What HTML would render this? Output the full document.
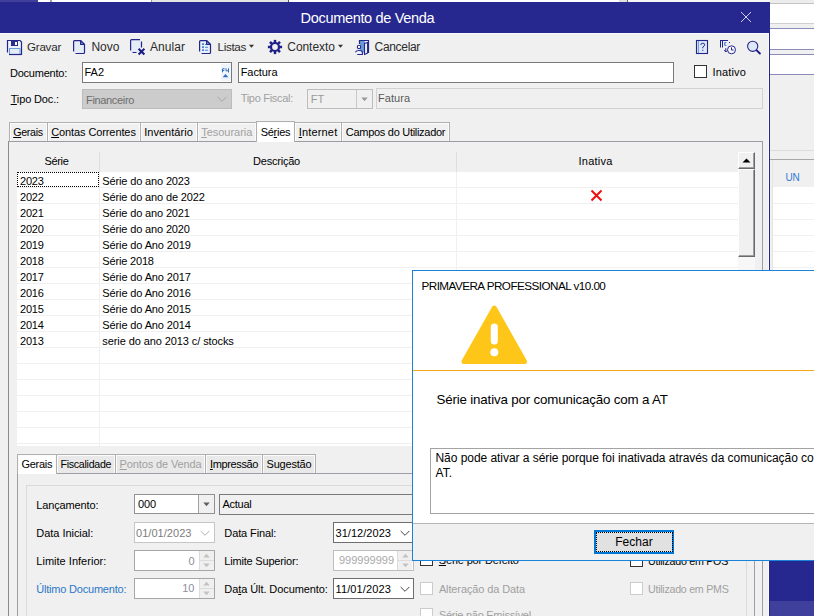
<!DOCTYPE html>
<html lang="pt"><head><meta charset="utf-8"><title>Documento de Venda</title>
<style>
html,body{margin:0;padding:0}
body{width:814px;height:616px;overflow:hidden;position:relative;background:#f0f0f0;font-family:"Liberation Sans",sans-serif;font-size:11px;color:#000}
div,span,svg{position:absolute;box-sizing:border-box}
.t{height:16px;line-height:16px;white-space:nowrap}
u{text-decoration:underline;text-underline-offset:1px}
#win{left:0;top:0;width:771px;height:616px;background:#f0f0f0;overflow:hidden}
#dlg{left:412px;top:270px;width:420px;height:291px;background:#fff;border:1px solid #1a82d9;overflow:hidden}
.fld{background:#fff;border:1px solid #7a7a7a}
.dis{background:#f0f0f0;border:1px solid #cfcfcf}
.tab{background:#f0f0f0;border:1px solid #b0b0b0;border-bottom:none;box-shadow:inset 1px 1px 0 #fbfbfb,inset -1px 0 0 #fbfbfb}
.cb{width:13px;height:13px;background:#fff;border:1px solid #333}
.cbd{width:13px;height:13px;background:#fff;border:1px solid #cccccc}
.hl{height:1px;background:#f0f0f0}

</style></head>
<body>
<!-- ================= background (other windows behind) ================= -->
<div id="bg" style="left:0;top:0;width:814px;height:616px;background:#f0f0f0">
  <!-- top strip -->
  <div style="left:0;top:0;width:38px;height:2px;background:#41419d"></div>
  <div style="left:38px;top:0;width:12px;height:2px;background:#fff"></div>
  <div style="left:50px;top:0;width:2px;height:2px;background:#a0a0a0"></div>
  <div style="left:52px;top:0;width:99px;height:2px;background:#fff"></div>
  <div style="left:151px;top:0;width:1px;height:2px;background:#999"></div>
  <div style="left:152px;top:0;width:136px;height:2px;background:#e4e4e4"></div>
  <div style="left:288px;top:0;width:1px;height:2px;background:#555"></div>
  <div style="left:289px;top:0;width:330px;height:2px;background:#fff"></div>
  <div style="left:619px;top:0;width:8px;height:2px;background:#e0e0e0"></div>
  <div style="left:627px;top:0;width:1px;height:2px;background:#666"></div>
  <div style="left:628px;top:0;width:142px;height:2px;background:#f6f6f6"></div>
  <!-- right side fields -->
  <div style="left:770px;top:0;width:44px;height:3px;background:#ececec"></div>
  <div style="left:770px;top:3px;width:44px;height:1px;background:#c4c4c4"></div>
  <div style="left:770px;top:4px;width:44px;height:20px;background:#fff"></div>
  <div style="left:770px;top:23px;width:44px;height:1px;background:#cfcfcf"></div>
  <div style="left:770px;top:28px;width:44px;height:22px;background:#fff;border-top:1px solid #8c8cb8;border-bottom:1px solid #8c8cb8"></div>
  <div style="left:770px;top:54px;width:44px;height:21px;background:#fff;border-top:1px solid #8c8cb8;border-bottom:1px solid #8c8cb8"></div>
  <div style="left:770px;top:150px;width:44px;height:1px;background:#dcdcdc"></div>
  <div style="left:770px;top:159px;width:44px;height:1px;background:#a8a8a8"></div>
  <div style="left:773px;top:187px;width:41px;height:90px;background:#fff"></div>
  <div class="hl" style="left:773px;top:203px;width:41px"></div>
  <div class="hl" style="left:773px;top:219px;width:41px"></div>
  <div class="hl" style="left:773px;top:235px;width:41px"></div>
  <div class="hl" style="left:773px;top:251px;width:41px"></div>
  <div class="hl" style="left:773px;top:267px;width:41px"></div>
  <div style="left:772px;top:160px;width:1px;height:120px;background:#e4e4e4"></div>
  <!-- bottom right blue -->
  <div style="left:769px;top:560px;width:45px;height:41px;background:#26288f"></div>
  <div style="left:770px;top:601px;width:44px;height:15px;background:#3f3f9c"></div>
<span class="t" id="t73" style="left:785.5px;top:169.7px;font-size:10.04px;color:#2f7bd0;letter-spacing:-0.250px;">UN</span>
</div>

<!-- ================= main window ================= -->
<div id="win" style="top:2px;height:614px;width:770px;background:#f0f0f0;border-right:1px solid #26288f">
<div id="wi" style="left:0;top:-2px;width:770px;height:616px">
  <div style="left:0;top:2px;width:770px;height:31px;background:#26288f"></div>
  <div style="left:0;top:33px;width:769px;height:1px;background:#fafafa"></div>
  <div style="left:768px;top:33px;width:1px;height:583px;background:#fafafa"></div>
  <!-- close X -->
  <svg style="left:739px;top:10px" width="14" height="14" viewBox="0 0 14 14"><path d="M2 2 L12 12 M12 2 L2 12" stroke="#e4e4f0" stroke-width="0.9" fill="none"/></svg>

  <!-- toolbar icons -->
  <!-- save -->
  <svg style="left:6px;top:39px" width="18" height="18" viewBox="0 0 18 18">
    <path d="M1.5 13.5 V1.5 H14 L15.5 3 V15.5 H3.5" fill="#eef2fa" stroke="#23268a" stroke-width="1.2"/>
    <rect x="3.5" y="9.5" width="10.5" height="6" fill="#e4ecf7" stroke="#6b9cd9" stroke-width="1"/>
    <path d="M3 15.5 H15.5" stroke="#23268a" stroke-width="1.2"/>
    <rect x="5" y="2" width="7" height="5" fill="#2a2f8c"/><rect x="9" y="3" width="2" height="3" fill="#fff"/>
  </svg>
  <!-- new -->
  <svg style="left:72px;top:39px" width="15" height="17" viewBox="0 0 15 17">
    <path d="M1.6 12.5 V2.6 Q1.6 1.6 2.6 1.6 H8.6 L12.5 5.5 V13.5 Q12.5 14.5 11.5 14.5 H3.5" fill="#e4ecf7" stroke="#23268a" stroke-width="1.2"/>
    <path d="M8.6 1.6 V5.5 H12.5 Z" fill="#6b9cd9" stroke="#23268a" stroke-width="1.1" stroke-linejoin="round"/>
  </svg>
  <!-- anular -->
  <svg style="left:129px;top:38px" width="18" height="19" viewBox="0 0 18 19">
    <rect x="2" y="2" width="10" height="12" fill="#e4ecf7"/>
    <path d="M1.6 12.6 V2.6 Q1.6 1.6 2.6 1.6 H11 M12.5 3.5 V9.5 M3.5 14.5 H7.5" fill="none" stroke="#23268a" stroke-width="1.2"/>
    <path d="M9.6 10.7 L15.4 16.5 M15.4 10.7 L9.6 16.5" stroke="#1c1c84" stroke-width="2" fill="none"/>
  </svg>
  <!-- listas -->
  <svg style="left:198px;top:39px" width="15" height="17" viewBox="0 0 15 17">
    <path d="M1.6 12.5 V2.6 Q1.6 1.6 2.6 1.6 H8.6 L12.5 5.5 V13.5 Q12.5 14.5 11.5 14.5 H3.5" fill="#eaf0fa" stroke="#23268a" stroke-width="1.2"/>
    <path d="M8.6 1.6 V5.5 H12.5 Z" fill="#6b9cd9" stroke="#23268a" stroke-width="1.1" stroke-linejoin="round"/>
    <path d="M4 4.2h2v1.9h-2z M4 7.2h2v1.9h-2z M4 10.2h2v1.9h-2z M7 7.7h3v1h-3z M7 10.7h3v1h-3z M7 5h1.2v.9h-1.2z" fill="#4a86d8"/>
  </svg>
  <!-- dropdown arrows -->
  <svg style="left:248px;top:44px" width="7" height="5" viewBox="0 0 7 5"><path d="M0.9 0.8 H6.1 L3.5 3.7 Z" fill="#333"/></svg>
  <svg style="left:337px;top:44px" width="7" height="5" viewBox="0 0 7 5"><path d="M0.9 0.8 H6.1 L3.5 3.7 Z" fill="#333"/></svg>
  <!-- gear -->
  <svg style="left:267px;top:39px" width="16" height="16" viewBox="-8 -8 16 16">
    <g fill="#1f2088"><rect x="-1.25" y="-7.1" width="2.5" height="14.2"/><rect x="-1.25" y="-7.1" width="2.5" height="14.2" transform="rotate(45)"/><rect x="-1.25" y="-7.1" width="2.5" height="14.2" transform="rotate(90)"/><rect x="-1.25" y="-7.1" width="2.5" height="14.2" transform="rotate(135)"/><circle r="5.1"/></g>
    <circle r="2.9" fill="#f0f0f0"/>
  </svg>
  <!-- cancelar (door) -->
  <svg style="left:354px;top:39px" width="17" height="17" viewBox="0 0 17 17">
    <rect x="6" y="2" width="5" height="11.5" fill="#6c9ad8"/>
    <path d="M5.5 5 V1.5 H14.5 V13.5 H13" fill="none" stroke="#23268a" stroke-width="1.2"/>
    <path d="M10.5 4.6 L13.6 3.4 V14 L10.5 15.6 Z" fill="#eef2fa" stroke="#23268a" stroke-width="1.1" stroke-linejoin="round"/>
    <circle cx="5" cy="8" r="1.7" fill="#fff" stroke="#23268a" stroke-width="1.1"/>
    <path d="M1.4 13.2 Q2.2 11.5 5 11.5 Q8 11.5 8.4 13.2 V15.5 H3.2" fill="#eef2fa" stroke="#23268a" stroke-width="1.1"/>
  </svg>
  <!-- help -->
  <svg style="left:695px;top:39px" width="14" height="16" viewBox="0 0 14 16">
    <rect x="1.5" y="1.5" width="11" height="13" fill="#dfe8f8" stroke="#23268a" stroke-width="1.1"/><path d="M3.4 2V14" stroke="#6b9cd9" stroke-width="1"/>
    <path d="M5.8 6 Q5.8 4.2 7.8 4.2 Q9.7 4.2 9.7 5.8 Q9.7 6.9 7.8 8 V9.3 M7.8 10.8V12" stroke="#23268a" stroke-width="0.95" fill="none"/>
  </svg>
  <!-- history -->
  <svg style="left:719px;top:39px" width="18" height="17" viewBox="0 0 18 17">
    <path d="M1 1.5h8 M1.5 1.5v7 M3.5 1.5v7" stroke="#23268a" stroke-width="1" fill="none"/>
    <path d="M5.5 3.5h2 M5.5 5h1.5 M5.5 6.5h2 M5.5 3.5v3" stroke="#5a90dc" stroke-width="1" fill="none"/>
    <path d="M10 3.5h1" stroke="#23268a" stroke-width="1"/>
    <circle cx="12.5" cy="10.8" r="4" fill="#f6f8fd" stroke="#23268a" stroke-width="1"/><path d="M12.5 8.4V11H14.6" stroke="#23268a" stroke-width="1" fill="none"/>
    <path d="M6.8 9.2 V12.8 M5.3 11.2 L6.8 13 L8.2 11.6" stroke="#23268a" stroke-width="1" fill="none"/>
  </svg>
  <!-- search -->
  <svg style="left:746px;top:40px" width="16" height="16" viewBox="0 0 16 16">
    <circle cx="6.7" cy="6.3" r="5.1" fill="#dfe8f8" stroke="#23268a" stroke-width="1.1"/><path d="M10.7 10.3 L13.9 13.5" stroke="#1c1c84" stroke-width="1.9" stroke-linecap="round"/>
  </svg>

  <!-- row 1 -->
  <div class="fld" style="left:82px;top:62px;width:150px;height:21px"></div>
  <div style="left:221px;top:64px;width:10px;height:17px;background:#f1f5fb"></div>
  <svg style="left:221px;top:67px" width="10" height="12" viewBox="0 0 10 12"><path d="M1.5 5.3V1.8H3.6M1.5 3.5H3.2 M5 1.3v2.5H7.5 M7.5 1.3V5.5" stroke="#2f6fc0" stroke-width="1" fill="none"/><path d="M1.6 10.3 L4.5 7 L7.4 10.3 Z" fill="#2f6fc0"/></svg>
  <div class="fld" style="left:238px;top:62px;width:436px;height:21px"></div>
  <div class="cb" style="left:694px;top:65px"></div>
  <!-- row 2 -->
  <div style="left:82px;top:89px;width:150px;height:20px;background:#cccccc;border:1px solid #bcbcbc"></div>
  <svg style="left:217px;top:96px" width="10" height="7" viewBox="0 0 10 7"><path d="M0.7 1 L5 5.3 L9.3 1" stroke="#a6a6a6" stroke-width="1" fill="none"/></svg>
  <div style="left:307px;top:89px;width:66px;height:20px;background:#f0f0f0;border:1px solid #bdbdbd"></div>
  <div style="left:356px;top:90px;width:1px;height:18px;background:#c8c8c8"></div>
  <svg style="left:361px;top:97px" width="7" height="5" viewBox="0 0 7 5"><path d="M0.3 0.5 H6.7 L3.5 4.2 Z" fill="#9a9a9a"/></svg>
  <div style="left:376px;top:88px;width:387px;height:21px;background:#f0f0f0;border:1px solid #d2d2d2"></div>

  <!-- outer tab control -->
  <div style="left:8px;top:141px;width:755px;height:480px;border:1px solid #9c9ca6;border-left:1.5px solid #8a8a92;background:#f0f0f0"></div>
  <div class="tab" style="left:9px;top:122px;width:39px;height:19px"></div>
  <div class="tab" style="left:47px;top:122px;width:94px;height:19px"></div>
  <div class="tab" style="left:140px;top:122px;width:58px;height:19px"></div>
  <div class="tab" style="left:197px;top:122px;width:60px;height:19px"></div>
  <div class="tab" style="left:294px;top:122px;width:48px;height:19px"></div>
  <div class="tab" style="left:341px;top:122px;width:109px;height:19px"></div>
  <div class="tab" style="left:256px;top:121px;width:39px;height:21px;background:#fff"></div>

  <!-- grid -->
  <div style="left:17px;top:172px;width:721px;height:274px;background:#fff"></div>
  <div id="gl"></div>
  <div style="left:99px;top:152px;width:1px;height:20px;background:#dedede"></div>
  <div style="left:456px;top:152px;width:1px;height:20px;background:#dedede"></div>
  <div style="left:99px;top:172px;width:1px;height:274px;background:#f0f0f0"></div>
  <div style="left:456px;top:172px;width:1px;height:274px;background:#f0f0f0"></div>
  <div class="hl" style="left:17px;top:187px;width:721px"></div><div class="hl" style="left:17px;top:203px;width:721px"></div><div class="hl" style="left:17px;top:219px;width:721px"></div><div class="hl" style="left:17px;top:235px;width:721px"></div><div class="hl" style="left:17px;top:251px;width:721px"></div><div class="hl" style="left:17px;top:267px;width:721px"></div><div class="hl" style="left:17px;top:283px;width:721px"></div><div class="hl" style="left:17px;top:299px;width:721px"></div><div class="hl" style="left:17px;top:315px;width:721px"></div><div class="hl" style="left:17px;top:331px;width:721px"></div><div class="hl" style="left:17px;top:347px;width:721px"></div><div class="hl" style="left:17px;top:363px;width:721px"></div><div class="hl" style="left:17px;top:379px;width:721px"></div><div class="hl" style="left:17px;top:395px;width:721px"></div><div class="hl" style="left:17px;top:411px;width:721px"></div><div class="hl" style="left:17px;top:427px;width:721px"></div><div class="hl" style="left:17px;top:443px;width:721px"></div>
  <div style="left:17px;top:172px;width:82px;height:15px;border:1px dotted #000"></div>
  <svg style="left:590px;top:189px" width="13" height="13" viewBox="0 0 13 13"><path d="M1.5 1.5 L11.5 11.5 M11.5 1.5 L1.5 11.5" stroke="#f20d0d" stroke-width="2" fill="none"/></svg>
  <!-- scrollbar -->
  <div style="left:738px;top:169px;width:17px;height:277px;background:#f7f7f7"></div>
  <div style="left:738px;top:152px;width:17px;height:17px;background:#f0f0f0;border:1px solid;border-color:#fff #696969 #696969 #fff;box-shadow:inset -1px -1px 0 #a0a0a0"></div>
  <svg style="left:742px;top:158px" width="9" height="5" viewBox="0 0 9 5"><path d="M0.5 4.5 H8.5 L4.5 0.5 Z" fill="#000"/></svg>
  <div style="left:738px;top:169px;width:17px;height:88px;background:#f0f0f0;border:1px solid;border-color:#fff #696969 #696969 #fff;box-shadow:inset -1px -1px 0 #a0a0a0"></div>

  <!-- inner tab control -->
  <div style="left:17px;top:473px;width:738px;height:160px;border:1px solid #9e9ea8;background:#f0f0f0"></div>
  <div class="tab" style="left:56px;top:454px;width:60px;height:19px;background:#e9e9e9"></div>
  <div class="tab" style="left:115px;top:454px;width:91px;height:19px;background:#e9e9e9"></div>
  <div class="tab" style="left:205px;top:454px;width:58px;height:19px;background:#e9e9e9"></div>
  <div class="tab" style="left:262px;top:454px;width:54px;height:19px;background:#e9e9e9"></div>
  <div class="tab" style="left:17px;top:454px;width:40px;height:20px;background:#fff"></div>
  <!-- inner frame -->
  <div style="left:26px;top:485px;width:721px;height:150px;border:1px solid #dadada"></div>

  <!-- form fields -->
  <div class="fld" style="left:134px;top:494px;width:81px;height:20px;border-color:#919191"></div>
  <div style="left:198px;top:495px;width:1px;height:18px;background:#a0a0a0"></div>
  <div style="left:199px;top:495px;width:15px;height:18px;background:#f0f0f0"></div>
  <svg style="left:203px;top:502px" width="7" height="5" viewBox="0 0 7 5"><path d="M0.3 0.5 H6.7 L3.5 4.2 Z" fill="#606060"/></svg>
  <div style="left:219px;top:494px;width:230px;height:21px;background:#f0f0f0;border:1px solid #7a7a7a"></div>

  <div style="left:134px;top:522px;width:81px;height:21px;background:#fff;border:1px solid #c6c6c6"></div>
  <svg style="left:200px;top:530px" width="10" height="7" viewBox="0 0 10 7"><path d="M0.7 1 L5 5.3 L9.3 1" stroke="#b0b0b0" stroke-width="1" fill="none"/></svg>
  <div class="fld" style="left:333px;top:522px;width:81px;height:21px;border-color:#6e6e6e"></div>
  <svg style="left:400px;top:530px" width="10" height="7" viewBox="0 0 10 7"><path d="M0.7 1 L5 5.3 L9.3 1" stroke="#444" stroke-width="1" fill="none"/></svg>

  <div style="left:134px;top:550px;width:81px;height:21px;background:#fff;border:1px solid #a6a6a6"></div>
  <div style="left:199px;top:551px;width:15px;height:19px;background:#f0f0f0;border-left:1px solid #dcdcdc"></div>
  <div style="left:200px;top:560px;width:14px;height:1px;background:#dcdcdc"></div>
  <svg style="left:203px;top:553px" width="7" height="15" viewBox="0 0 7 15"><path d="M0.3 4.5 H6.7 L3.5 0.8 Z M0.3 10.5 H6.7 L3.5 14.2 Z" fill="#c2c2c2"/></svg>
  <div style="left:333px;top:550px;width:81px;height:21px;background:#fff;border:1px solid #bdbdbd"></div>
  <div style="left:397px;top:551px;width:15px;height:19px;background:#f0f0f0;border-left:1px solid #dcdcdc"></div>
  <div style="left:398px;top:560px;width:14px;height:1px;background:#dcdcdc"></div>
  <svg style="left:402px;top:553px" width="7" height="15" viewBox="0 0 7 15"><path d="M0.3 4.5 H6.7 L3.5 0.8 Z M0.3 10.5 H6.7 L3.5 14.2 Z" fill="#c2c2c2"/></svg>

  <div style="left:134px;top:578px;width:81px;height:21px;background:#fff;border:1px solid #a6a6a6"></div>
  <div style="left:199px;top:579px;width:15px;height:19px;background:#f0f0f0;border-left:1px solid #dcdcdc"></div>
  <div style="left:200px;top:588px;width:14px;height:1px;background:#dcdcdc"></div>
  <svg style="left:203px;top:581px" width="7" height="15" viewBox="0 0 7 15"><path d="M0.3 4.5 H6.7 L3.5 0.8 Z M0.3 10.5 H6.7 L3.5 14.2 Z" fill="#c2c2c2"/></svg>
  <div class="fld" style="left:333px;top:578px;width:81px;height:21px;border-color:#6e6e6e"></div>
  <svg style="left:400px;top:586px" width="10" height="7" viewBox="0 0 10 7"><path d="M0.7 1 L5 5.3 L9.3 1" stroke="#444" stroke-width="1" fill="none"/></svg>

  <!-- checkboxes -->
  <div class="cb" style="left:420px;top:553px"></div>
  <div class="cbd" style="left:420px;top:582px"></div>
  <div class="cbd" style="left:420px;top:608px"></div>
  <div class="cb" style="left:630px;top:554px"></div>
  <div class="cbd" style="left:630px;top:582px"></div>
<span class="t" id="t0" style="left:300.6px;top:9.5px;font-size:14.55px;color:#fff;letter-spacing:-0.351px;">Documento de Venda</span>
<span class="t" id="t1" style="left:27px;top:38.5px;font-size:11.64px;color:#2b2b2b;letter-spacing:-0.255px;">Gravar</span>
<span class="t" id="t2" style="left:91.5px;top:38.5px;font-size:12px;color:#2b2b2b;letter-spacing:-0.054px;">Novo</span>
<span class="t" id="t3" style="left:150px;top:38.5px;font-size:12px;color:#2b2b2b;letter-spacing:0.052px;">Anular</span>
<span class="t" id="t4" style="left:217.5px;top:38.5px;font-size:11.64px;color:#2b2b2b;letter-spacing:-0.312px;">Listas</span>
<span class="t" id="t5" style="left:287.3px;top:38.5px;font-size:12px;color:#2b2b2b;letter-spacing:-0.066px;">Contexto</span>
<span class="t" id="t6" style="left:374.6px;top:38.5px;font-size:12px;color:#2b2b2b;letter-spacing:-0.329px;">Cancelar</span>
<span class="t" id="t7" style="left:10px;top:64.8px;font-size:11px;color:#000;letter-spacing:-0.231px;">Documento:</span>
<span class="t" id="t8" style="left:84.5px;top:64.3px;font-size:11px;color:#000;letter-spacing:-0.026px;">FA2</span>
<span class="t" id="t9" style="left:240.7px;top:63.8px;font-size:11px;color:#000;letter-spacing:-0.071px;">Factura</span>
<span class="t" id="t10" style="left:712.6px;top:64.4px;font-size:11px;color:#000;letter-spacing:0.140px;">Inativo</span>
<span class="t" id="t11" style="left:10.7px;top:91.4px;font-size:11px;color:#000;letter-spacing:-0.143px;"><u>T</u>ipo Doc.:</span>
<span class="t" id="t12" style="left:86px;top:91.8px;font-size:11px;color:#6d6d6d;letter-spacing:-0.336px;">Financeiro</span>
<span class="t" id="t13" style="left:240.7px;top:89.7px;font-size:11px;color:#a0a0a0;letter-spacing:-0.302px;">Tipo Fiscal:</span>
<span class="t" id="t14" style="left:310.7px;top:90.7px;font-size:11px;color:#9a9a9a;letter-spacing:0.023px;">FT</span>
<span class="t" id="t15" style="left:378px;top:89.6px;font-size:11px;color:#5a5a5a;letter-spacing:0.067px;">Fatura</span>
<span class="t" id="t16" style="left:13.2px;top:124px;font-size:10.67px;color:#000;letter-spacing:-0.301px;"><u>G</u>erais</span>
<span class="t" id="t17" style="left:51.2px;top:124px;font-size:11px;color:#000;letter-spacing:-0.101px;"><u>C</u>ontas Correntes</span>
<span class="t" id="t18" style="left:144.2px;top:124px;font-size:11px;color:#000;letter-spacing:0.029px;">Inventário</span>
<span class="t" id="t19" style="left:201.2px;top:124px;font-size:11px;color:#a0a0a0;letter-spacing:-0.026px;"><u>T</u>esouraria</span>
<span class="t" id="t20" style="left:260.7px;top:124px;font-size:11px;color:#000;letter-spacing:-0.267px;">Sé<u>r</u>ies</span>
<span class="t" id="t21" style="left:298.7px;top:124px;font-size:11px;color:#000;letter-spacing:0.173px;"><u>I</u>nternet</span>
<span class="t" id="t22" style="left:345.8px;top:124px;font-size:11px;color:#000;letter-spacing:-0.288px;">Campos do Utilizador</span>
<span class="t" id="t23" style="left:56.5px;transform:translateX(-50%);top:153px;font-size:11px;color:#000;letter-spacing:-0.338px;">Série</span>
<span class="t" id="t24" style="left:276.5px;transform:translateX(-50%);top:153px;font-size:11px;color:#000;letter-spacing:-0.212px;">Descrição</span>
<span class="t" id="t25" style="left:595.5px;transform:translateX(-50%);top:153px;font-size:11px;color:#000;letter-spacing:0.225px;">Inativa</span>
<span class="t" id="t26" style="left:20px;top:173px;font-size:11px;color:#000;letter-spacing:-0.221px;">2023</span>
<span class="t" id="t27" style="left:102.3px;top:173px;font-size:11px;color:#000;letter-spacing:-0.142px;">Série do ano 2023</span>
<span class="t" id="t28" style="left:20px;top:189px;font-size:11px;color:#000;letter-spacing:-0.221px;">2022</span>
<span class="t" id="t29" style="left:102.3px;top:189px;font-size:11px;color:#000;letter-spacing:-0.135px;">Série do ano de 2022</span>
<span class="t" id="t30" style="left:20px;top:205px;font-size:11px;color:#000;letter-spacing:-0.221px;">2021</span>
<span class="t" id="t31" style="left:102.3px;top:205px;font-size:11px;color:#000;letter-spacing:-0.142px;">Série do ano 2021</span>
<span class="t" id="t32" style="left:20px;top:221px;font-size:11px;color:#000;letter-spacing:-0.221px;">2020</span>
<span class="t" id="t33" style="left:102.3px;top:221px;font-size:11px;color:#000;letter-spacing:-0.142px;">Série do ano 2020</span>
<span class="t" id="t34" style="left:20px;top:237px;font-size:11px;color:#000;letter-spacing:-0.221px;">2019</span>
<span class="t" id="t35" style="left:102.3px;top:237px;font-size:11px;color:#000;letter-spacing:-0.119px;">Série do Ano 2019</span>
<span class="t" id="t36" style="left:20px;top:253px;font-size:11px;color:#000;letter-spacing:-0.221px;">2018</span>
<span class="t" id="t37" style="left:102.3px;top:253px;font-size:11px;color:#000;letter-spacing:-0.172px;">Série 2018</span>
<span class="t" id="t38" style="left:20px;top:269px;font-size:11px;color:#000;letter-spacing:-0.221px;">2017</span>
<span class="t" id="t39" style="left:102.3px;top:269px;font-size:11px;color:#000;letter-spacing:-0.119px;">Série do Ano 2017</span>
<span class="t" id="t40" style="left:20px;top:285px;font-size:11px;color:#000;letter-spacing:-0.221px;">2016</span>
<span class="t" id="t41" style="left:102.3px;top:285px;font-size:11px;color:#000;letter-spacing:-0.119px;">Série do Ano 2016</span>
<span class="t" id="t42" style="left:20px;top:301px;font-size:11px;color:#000;letter-spacing:-0.221px;">2015</span>
<span class="t" id="t43" style="left:102.3px;top:301px;font-size:11px;color:#000;letter-spacing:-0.119px;">Série do Ano 2015</span>
<span class="t" id="t44" style="left:20px;top:317px;font-size:11px;color:#000;letter-spacing:-0.221px;">2014</span>
<span class="t" id="t45" style="left:102.3px;top:317px;font-size:11px;color:#000;letter-spacing:-0.119px;">Série do Ano 2014</span>
<span class="t" id="t46" style="left:20px;top:333px;font-size:11px;color:#000;letter-spacing:-0.221px;">2013</span>
<span class="t" id="t47" style="left:102.3px;top:333px;font-size:11px;color:#000;letter-spacing:-0.090px;">serie do ano 2013 c/ stocks</span>
<span class="t" id="t48" style="left:21.5px;top:455.8px;font-size:11px;color:#000;letter-spacing:-0.301px;">Gerais</span>
<span class="t" id="t49" style="left:60.5px;top:455.8px;font-size:10.67px;color:#000;letter-spacing:-0.291px;">Fiscalidade</span>
<span class="t" id="t50" style="left:119.60000000000001px;top:455.8px;font-size:11px;color:#a0a0a0;letter-spacing:-0.121px;"><u>P</u>ontos de Venda</span>
<span class="t" id="t51" style="left:210.0px;top:455.8px;font-size:11px;color:#000;letter-spacing:-0.362px;"><u>I</u>mpressão</span>
<span class="t" id="t52" style="left:266.5px;top:455.8px;font-size:11px;color:#000;letter-spacing:-0.198px;">Sugestão</span>
<span class="t" id="t53" style="left:36.3px;top:497px;font-size:11px;color:#000;letter-spacing:-0.146px;">Lançamento:</span>
<span class="t" id="t54" style="left:36.3px;top:525px;font-size:11px;color:#000;letter-spacing:-0.037px;">Data Inicial:</span>
<span class="t" id="t55" style="left:36.3px;top:553px;font-size:11px;color:#000;letter-spacing:0.019px;">Limite Inferior:</span>
<span class="t" id="t56" style="left:36.3px;top:580.8px;font-size:11px;color:#2a78c8;letter-spacing:-0.209px;">Último Documento:</span>
<span class="t" id="t57" style="left:138px;top:495.5px;font-size:11px;color:#000;letter-spacing:-0.120px;">000</span>
<span class="t" id="t58" style="left:222.5px;top:495.5px;font-size:11px;color:#000;letter-spacing:-0.263px;">Actual</span>
<span class="t" id="t59" style="left:136px;top:525px;font-size:11px;color:#7c7c7c;letter-spacing:0.044px;">01/01/2023</span>
<span class="t" id="t60" style="left:194.5px;transform:translateX(-100%);top:552.5px;font-size:11px;color:#8e8e9c;">0</span>
<span class="t" id="t61" style="left:194.5px;transform:translateX(-100%);top:580.3px;font-size:11px;color:#8e8e9c;">10</span>
<span class="t" id="t62" style="left:224.3px;top:525px;font-size:11px;color:#000;letter-spacing:-0.109px;">Data Final:</span>
<span class="t" id="t63" style="left:224.3px;top:553px;font-size:11px;color:#000;letter-spacing:-0.190px;">Limite Superior:</span>
<span class="t" id="t64" style="left:224.3px;top:580.8px;font-size:11px;color:#000;letter-spacing:-0.084px;">Da<u>t</u>a Últ. Documento:</span>
<span class="t" id="t65" style="left:335.5px;top:525px;font-size:11px;color:#000;letter-spacing:0.044px;">31/12/2023</span>
<span class="t" id="t66" style="left:394px;transform:translateX(-100%);top:552px;font-size:11px;color:#a8a8a8;">999999999</span>
<span class="t" id="t67" style="left:335.5px;top:580.8px;font-size:11px;color:#000;letter-spacing:0.125px;">11/01/2023</span>
<span class="t" id="t68" style="left:438.8px;top:552.1px;font-size:11px;color:#000;letter-spacing:-0.151px;"><u>S</u>érie por Defeito</span>
<span class="t" id="t69" style="left:438.9px;top:580.6px;font-size:11px;color:#a0a0a0;letter-spacing:-0.121px;">Alteração da Data</span>
<span class="t" id="t70" style="left:438.9px;top:606.5px;font-size:11px;color:#a0a0a0;letter-spacing:-0.275px;">Série não Emissível</span>
<span class="t" id="t71" style="left:648px;top:552.9px;font-size:10.67px;color:#000;letter-spacing:-0.257px;">Utilizado em POS</span>
<span class="t" id="t72" style="left:648px;top:580.6px;font-size:10.67px;color:#a0a0a0;letter-spacing:-0.262px;">Utilizado em PMS</span>
</div>
</div>

<!-- ================= message dialog ================= -->
<div id="dl" style="left:0;top:0;width:814px;height:616px;overflow:hidden">
  <div style="left:412px;top:270px;width:420px;height:291px;background:#fff;border:1px solid #1a82d9"></div>
  <svg style="left:458px;top:303px" width="72" height="64" viewBox="0 0 72 64">
    <path d="M36.3 5 L66.5 58.5 H6 Z" fill="#ffc61a" stroke="#ffc61a" stroke-width="5" stroke-linejoin="round"/>
    <rect x="32.8" y="20.5" width="7" height="21" rx="3.5" fill="#fff"/><circle cx="36.3" cy="49.3" r="4" fill="#fff"/>
  </svg>
  <div style="left:413px;top:370px;width:410px;height:1px;background:#f5a81c"></div>
  <div style="left:430px;top:448px;width:400px;height:66px;background:#fff;border:1px solid #a3a3a3"></div>
  <div style="left:413px;top:523px;width:410px;height:37px;background:#f0f0f0;border-top:1px solid #b5b5b5"></div>
  <div style="left:594px;top:530px;width:80px;height:24px;background:#e1e1e1;border:2px solid #0078d7"></div>
  <div style="left:596px;top:532px;width:77px;height:20px;border:1px dotted #000"></div>
<span class="t" id="t74" style="left:421.5px;top:277.6px;font-size:11.7px;color:#000;letter-spacing:-0.538px;">PRIMAVERA PROFESSIONAL v10.00</span>
<span class="t" id="t75" style="left:436.5px;top:391.8px;font-size:13.33px;color:#000;letter-spacing:-0.167px;">Série inativa por comunicação com a AT</span>
<span class="t" id="t76" style="left:435.5px;top:450px;font-size:12px;color:#000;letter-spacing:-0.049px;">Não pode ativar a série porque foi inativada através da comunicação com a</span>
<span class="t" id="t77" style="left:435.5px;top:464.6px;font-size:12px;color:#000;letter-spacing:0.016px;">AT.</span>
<span class="t" id="t78" style="left:634px;transform:translateX(-50%);top:534.2px;font-size:12px;color:#000;letter-spacing:0.023px;">Fechar</span>
</div>

</body></html>
